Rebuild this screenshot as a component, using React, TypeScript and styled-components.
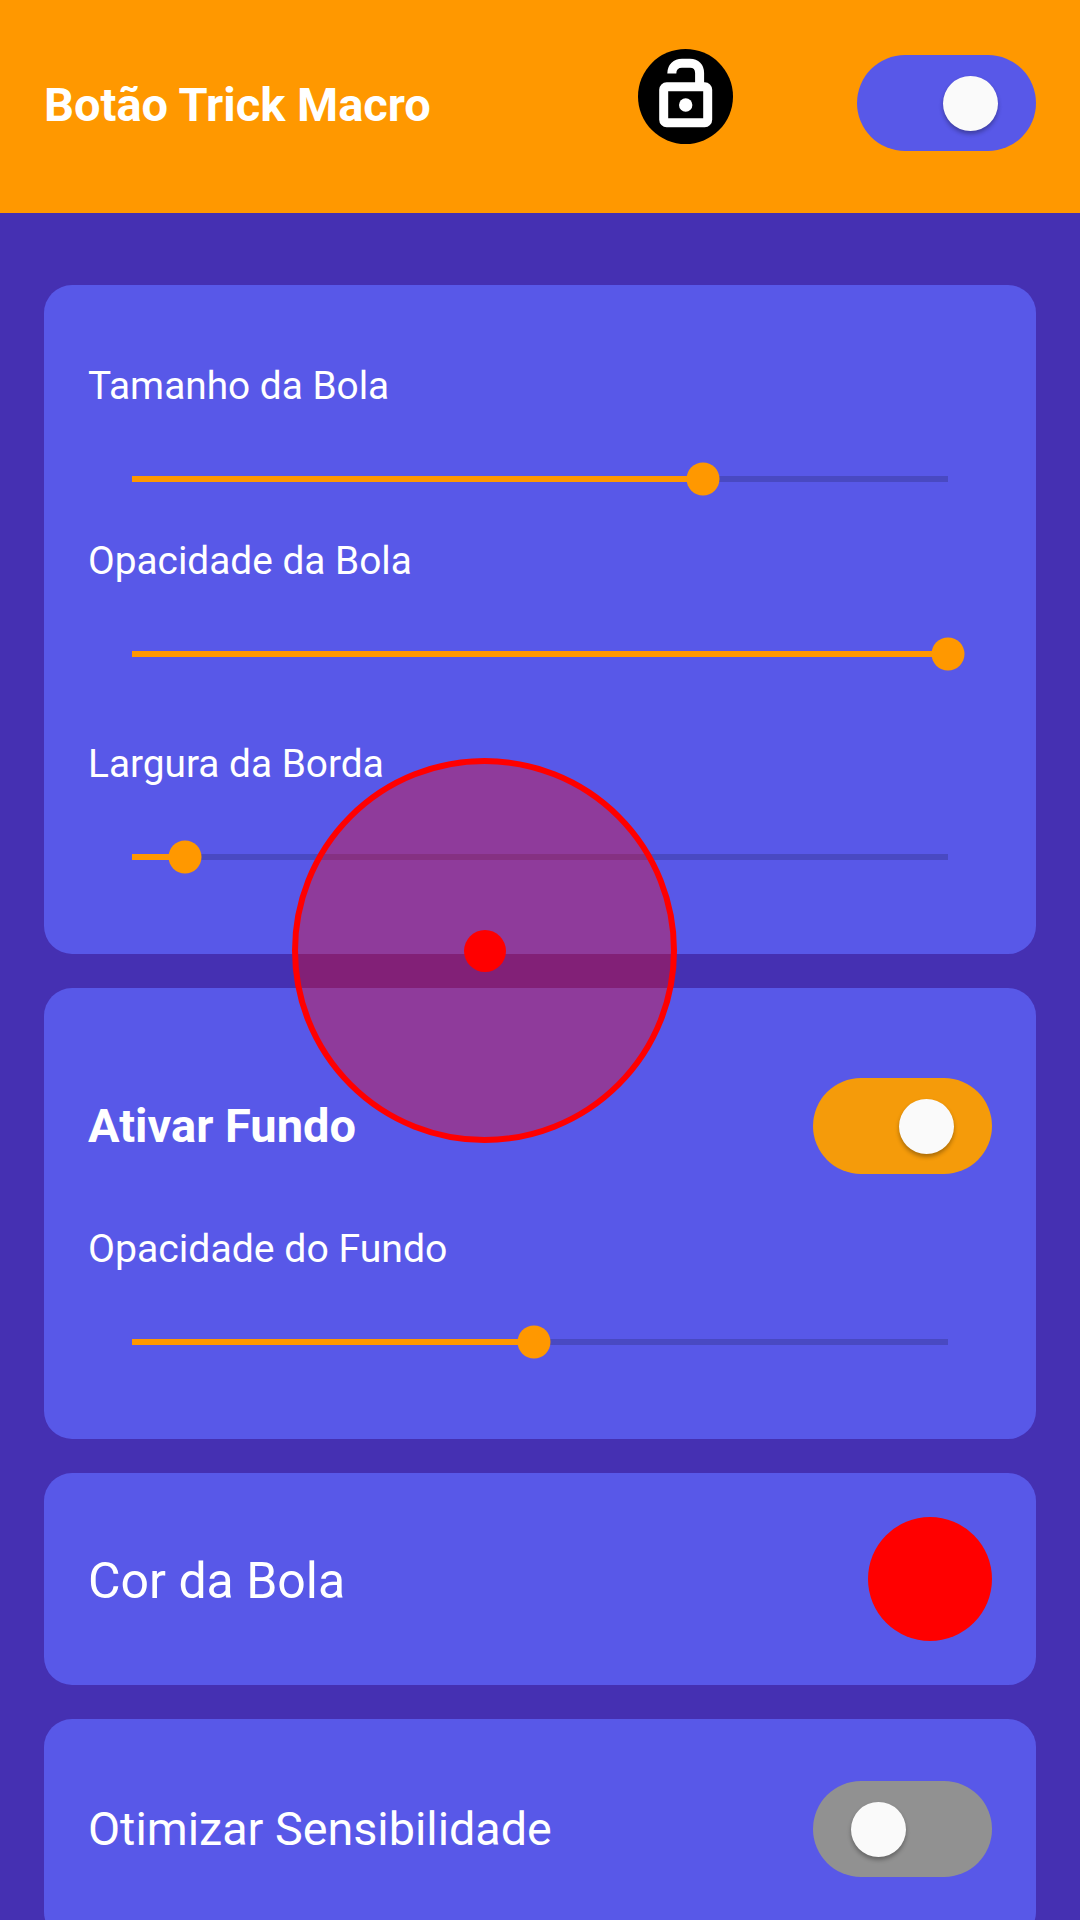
import {FC} from "react";
import styled, {createGlobalStyle} from "styled-components";

const GlobalStyle = createGlobalStyle`
	html,
	body {
		margin: 0;
		padding: 0;
		overflow: hidden;
		background: #4530b2;
	}
`;

const Screen = styled.div`
	position: relative;
	width: 1080px;
	height: 1920px;
	overflow: hidden;
	background: #4530b2;
	font-family: Roboto, "Noto Sans", sans-serif;
	color: #fff;
`;

const Header = styled.header`
	height: 213px;
	box-sizing: border-box;
	padding: 49px 44px 0 44px;
	display: flex;
	align-items: flex-start;
	background: #ff9800;
`;

const Title = styled.h1`
	margin: 28px 0 0 0;
	width: 594px;
	font-size: 47px;
	line-height: 56px;
	font-weight: 700;
	white-space: nowrap;
`;

const LockBadge = styled.div`
	width: 95px;
	height: 95px;
	border-radius: 50%;
	background: #000;
	display: flex;
`;

const Spacer = styled.div`
	flex: 1;
`;

const HeaderSwitch = styled.div`
	margin-top: 6px;
`;

const Content = styled.main`
	padding: 72px 44px 0 44px;
	display: flex;
	flex-direction: column;
	gap: 34px;
`;

const Card = styled.section<{$top: number; $bottom: number}>`
	padding: ${(p) => p.$top}px 44px ${(p) => p.$bottom}px 44px;
	border-radius: 28px;
	background: #5858e8;
`;

const Label = styled.div<{$gap?: number; $size?: number}>`
	margin-top: ${(p) => p.$gap ?? 0}px;
	font-size: ${(p) => p.$size ?? 38.8}px;
	line-height: 42px;
	font-weight: 400;
`;

const SliderBox = styled.div`
	height: 60px;
	margin: 42px 44px 0 44px;
	display: flex;
	align-items: center;
`;

const Track = styled.div`
	position: relative;
	flex: 1;
	height: 6px;
	background: #4949c2;
`;

const TrackFill = styled.div`
	height: 100%;
	background: #ff9800;
`;

const Thumb = styled.div`
	position: absolute;
	top: 50%;
	width: 33px;
	height: 33px;
	border-radius: 50%;
	background: #ff9800;
	transform: translate(-50%, -50%);
`;

const SwitchRow = styled.div`
	display: flex;
	align-items: center;
	justify-content: space-between;
`;

const BoldLabel = styled.div`
	font-size: 47px;
	line-height: 50px;
	font-weight: 700;
`;

const BigLabel = styled.div<{$size: number; $drop?: number}>`
	padding-top: ${(p) => p.$drop ?? 0}px;
	font-size: ${(p) => p.$size}px;
	line-height: 52px;
	font-weight: 400;
`;

const SwitchTrack = styled.div<{$color: string; $on: boolean}>`
	width: 179px;
	height: 96px;
	flex: none;
	box-sizing: border-box;
	padding: 0 38px;
	border-radius: 48px;
	display: flex;
	align-items: center;
	justify-content: ${(p) => (p.$on ? "flex-end" : "flex-start")};
	background: ${(p) => p.$color};
`;

const SwitchKnob = styled.div`
	width: 55px;
	height: 55px;
	border-radius: 50%;
	background: #fafafa;
	box-shadow: 0 3px 4px rgba(0, 0, 0, 0.3);
`;

const Swatch = styled.div`
	width: 124px;
	height: 124px;
	border-radius: 50%;
	background: #f00;
`;

const FloatingBall = styled.div`
	position: absolute;
	left: 292px;
	top: 758px;
	width: 385px;
	height: 385px;
	box-sizing: border-box;
	padding: 1px 0 0 1px;
	border: 6px solid #f00;
	border-radius: 50%;
	background: rgba(255, 0, 0, 0.33);
	display: flex;
	align-items: center;
	justify-content: center;
`;

const BallDot = styled.div`
	width: 42px;
	height: 42px;
	border-radius: 50%;
	background: #f00;
`;

const Slider: FC<{value: number}> = ({value}) => (
	<SliderBox>
		<Track>
			<TrackFill style={{width: `${value * 100}%`}} />
			<Thumb style={{left: `${value * 100}%`}} />
		</Track>
	</SliderBox>
);

const Switch: FC<{on: boolean; color: string}> = ({on, color}) => (
	<SwitchTrack $on={on} $color={color}>
		<SwitchKnob />
	</SwitchTrack>
);

const LockIcon = () => (
	<svg width="95" height="95" viewBox="0 0 95 95" fill="none">
		<rect x="25.7" y="37.8" width="44" height="36" rx="3" stroke="#fff" strokeWidth="9" />
		<path
			d="M33.8 24.5C33.8 18 38 14.3 44 14.3H52C58 14.3 61.6 18 61.6 24V36"
			stroke="#fff"
			strokeWidth="9"
		/>
		<circle cx="47.7" cy="56" r="6.7" fill="#fff" />
	</svg>
);

export default function App() {
	return (
		<Screen>
			<GlobalStyle />
			<Header>
				<Title>Botão Trick Macro</Title>
				<LockBadge>
					<LockIcon />
				</LockBadge>
				<Spacer />
				<HeaderSwitch>
					<Switch on color="#5858e8" />
				</HeaderSwitch>
			</Header>
			<Content>
				<Card $top={80} $bottom={67}>
					<Label>Tamanho da Bola</Label>
					<Slider value={0.7} />
					<Label $gap={31}>Opacidade da Bola</Label>
					<Slider value={1} />
					<Label $gap={59}>Largura da Borda</Label>
					<Slider value={0.065} />
				</Card>
				<Card $top={90} $bottom={67}>
					<SwitchRow>
						<BoldLabel>Ativar Fundo</BoldLabel>
						<Switch on color="#f59b0a" />
					</SwitchRow>
					<Label $gap={54} $size={39.2}>
						Opacidade do Fundo
					</Label>
					<Slider value={0.4926} />
				</Card>
				<Card $top={44} $bottom={44}>
					<SwitchRow>
						<BigLabel $size={50} $drop={3}>
							Cor da Bola
						</BigLabel>
						<Swatch />
					</SwitchRow>
				</Card>
				<Card $top={62} $bottom={63}>
					<SwitchRow>
						<BigLabel $size={46.7}>Otimizar Sensibilidade</BigLabel>
						<Switch on={false} color="#919191" />
					</SwitchRow>
				</Card>
			</Content>
			<FloatingBall>
				<BallDot />
			</FloatingBall>
		</Screen>
	);
}
